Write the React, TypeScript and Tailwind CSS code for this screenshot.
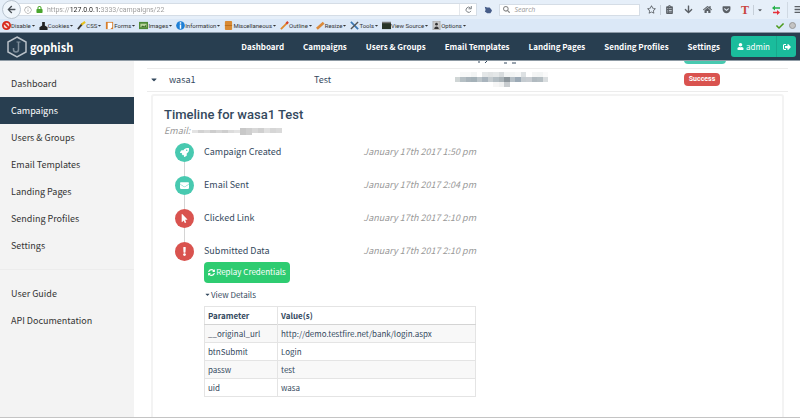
import React from "react";
import {
  FaArrowLeft, FaArrowDown, FaBars, FaCaretDown, FaCheck, FaEnvelope, FaExclamation,
  FaGetPocket, FaHome, FaLock, FaMousePointer, FaClipboardList, FaRegStar, FaRocket, FaSearch,
  FaSignOutAlt, FaSyncAlt, FaUser,
} from "react-icons/fa";
import { VscInfo } from "react-icons/vsc";

const sans = "font-['Noto_Sans_CJK_JP',sans-serif]";

const tools: { label: string; icon: React.ReactNode }[] = [
  { label: "Disable", icon: <><circle cx="5" cy="5" r="4" fill="#f6d5d0" stroke="#d8281c" strokeWidth="2" /><path d="M2 2l6 6" stroke="#d8281c" strokeWidth="2" /></> },
  { label: "Cookies", icon: <path d="M3.5 1h3v4l3 2v3H.5V7l3-2z" fill="#222" /> },
  { label: "CSS", icon: <><path d="M1 9l5-6" stroke="#333" strokeWidth="2" /><path d="M5 4l4-3" stroke="#e8c21c" strokeWidth="2.500" /></> },
  { label: "Forms", icon: <><path d="M1 1h8v8H1z" fill="#d87f2c" /><path d="M3 2h5v5l-2 2H3z" fill="#fff" /></> },
  { label: "Images", icon: <><path d="M0 1h10v8H0z" fill="#4d8a37" /><path d="M1.500 3h7v4h-7z" fill="#b9d49d" /><path d="M2 7l2-2 2 1 2-2v3z" fill="#3f6f2c" /></> },
  { label: "Information", icon: <><circle cx="5" cy="5" r="4.800" fill="#1d7fd6" /><path d="M5 1.500v1.500M5 4v4.500" stroke="#fff" strokeWidth="1.600" /></> },
  { label: "Miscellaneous", icon: <><rect x="1" y="0" width="8" height="10" rx="1" fill="#d88a34" /><path d="M1 5h8" stroke="#b96d1c" /></> },
  { label: "Outline", icon: <><path d="M1 9l7-7" stroke="#e08a2c" strokeWidth="2" /><path d="M7 3l2-2" stroke="#d6432c" strokeWidth="2.500" /></> },
  { label: "Resize", icon: <path d="M1 8.500l7.500-6.500" stroke="#dc8a3a" strokeWidth="3" /> },
  { label: "Tools", icon: <><path d="M1 1l8 8" stroke="#3c78b4" strokeWidth="2" /><path d="M9 1L1 9" stroke="#555" strokeWidth="1.500" /></> },
  { label: "View Source", icon: <><path d="M0 1h10v8H0z" fill="#273427" /><path d="M0 1h10v1.500H0z" fill="#777" /></> },
  { label: "Options", icon: <><path d="M1 0h8v10H1z" fill="#c9c9c9" stroke="#888" strokeWidth=".5" /><circle cx="5" cy="3.500" r="1.500" fill="#333" /><path d="M2.500 9a2.500 3 0 0 1 5 0z" fill="#333" /></> },
];

const navLinks = ["Dashboard", "Campaigns", "Users & Groups", "Email Templates", "Landing Pages", "Sending Profiles", "Settings"];
const helpLinks = ["User Guide", "API Documentation"];

const events = [
  { label: "Campaign Created", time: "January 17th 2017 1:50 pm", Icon: FaRocket, tone: "bg-[#48c9b0]" },
  { label: "Email Sent", time: "January 17th 2017 2:04 pm", Icon: FaEnvelope, tone: "bg-[#48c9b0]" },
  { label: "Clicked Link", time: "January 17th 2017 2:10 pm", Icon: FaMousePointer, tone: "bg-[#d9534f]" },
  { label: "Submitted Data", time: "January 17th 2017 2:10 pm", Icon: FaExclamation, tone: "bg-[#d9534f]" },
];

const params = [
  ["__original_url", "http://demo.testfire.net/bank/login.aspx"],
  ["btnSubmit", "Login"],
  ["passw", "test"],
  ["uid", "wasa"],
];

const mosaic = [
  ["#fff", "#f8f9f9", "#f8f9f9", "#f2f4f4", "#fff", "#e4e7e8", "#e0e3e4", "#e4e7e8", "#d8dcde", "#f2f4f4", "#f2f4f4", "#f6f7f7", "#dde1e3", "#fff", "#f4f5f5", "#f2f4f4", "#fafafa"],
  ["#d0d6d6", "#b5bfc4", "#a9b4bb", "#a4b1b8", "#bcc5ca", "#a9b4bd", "#c4cbcf", "#b3bdc3", "#aab3b8", "#8d969c", "#b5bfc6", "#9caab6", "#c4cbd0", "#c8cdd2", "#b1bac0", "#b5bec3", "#d9dddf"],
  ["#fff", "#fff", "#fff", "#fff", "#fff", "#fff", "#fff", "#f6f6f6", "#f0f1f1", "#c8cccf", "#fff", "#fff", "#fff", "#fff", "#fff", "#fff", "#fff"],
];

function BrowserChrome() {
  return (
    <header className="shrink-0 border-b border-[#8d9aa8] bg-[#dbe8f7] font-['Roboto',sans-serif] text-[#333]">
      <div className="flex h-[19px] items-center bg-[#e6eff9] text-[#5b6066]">
        <button aria-label="Back" className="z-10 ml-0.5 grid size-[19px] shrink-0 place-items-center rounded-full border border-[#b9c4d0] bg-[#eff5fb]">
          <FaArrowLeft className="size-[9px] text-[#4c5258]" />
        </button>
        <div className="-ml-1 flex h-[13px] flex-[463_1_0%] items-center border border-[#d5dde6] bg-white">
          <VscInfo className="ml-1.5 size-2 shrink-0 text-[#888]" />
          <FaLock className="mx-1 size-[7px] shrink-0 text-[#4aa52e]" />
          <input
            aria-label="Address"
            defaultValue="https://127.0.0.1:3333/campaigns/22"
            className="h-full min-w-0 flex-1 bg-[linear-gradient(90deg,#999_23px,#222_23px,#222_53px,#999_53px)] bg-clip-text text-[7px] leading-[11px] text-transparent"
          />
          <button aria-label="Reload" className="grid h-full w-[17px] place-items-center border-l border-[#e5e8ec]">
            <svg viewBox="0 0 10 10" className="size-[7px]" fill="none" stroke="#7b8085" strokeWidth="1.400"><path d="M8 3A3.700 3.700 0 1 0 8.500 7" /><path d="M9 0v4H5" /></svg>
          </button>
        </div>
        <svg viewBox="0 0 10 10" className="mx-[7px] size-2 shrink-0" fill="#465c88"><path d="M1 1l3 1 3 0 2 2 1 2-2 3H4L1 7l1-2z" /></svg>
        <div className="flex h-3 flex-[140_1_0%] items-center border border-[#d5dde6] bg-white">
          <FaSearch className="ml-[3px] size-[7px] shrink-0 text-[#888]" />
          <input aria-label="Search" placeholder="Search" className="ml-1 h-full min-w-0 flex-1 font-['Open_Sans',sans-serif] text-[7px] italic placeholder:text-[#999]" />
        </div>
        <div className="ml-[7px] flex shrink-0 items-center">
          <button aria-label="Bookmark"><FaRegStar className="size-[9px]" /></button>
          <span className="ml-1 h-2.5 w-px bg-[#c6cfd9]" />
          <button aria-label="Bookmarks list" className="ml-1"><FaClipboardList className="size-[9px]" /></button>
          <button aria-label="Downloads" className="ml-2.5"><FaArrowDown className="size-[9px]" /></button>
          <button aria-label="Home" className="ml-2.5"><FaHome className="size-[9px]" /></button>
          <button aria-label="Pocket" className="ml-2.5"><FaGetPocket className="size-[9px]" /></button>
          <button aria-label="Text tool" className="ml-2.5 w-2 font-['Liberation_Serif',serif] text-[12px] leading-3 font-bold text-[#c9443c]">T</button>
          <span className="ml-1 h-2.5 w-px bg-[#c6cfd9]" />
          <button aria-label="More" className="ml-[3px]"><FaCaretDown className="size-[6px]" /></button>
          <button aria-label="Proxy" className="ml-2">
            <svg viewBox="0 0 10 10" className="size-2.5"><path d="M1 3l3-2.500v1.700h5v1.600H4v1.700z" fill="#24b04a" /><path d="M9 7.500L6 5v1.700H2v1.600h4V10z" fill="#e5303a" /></svg>
          </button>
          <span className="ml-1.5 h-4 w-px bg-[#d0d9e3]" />
          <button aria-label="Menu" className="ml-1.5 w-1.5 overflow-hidden"><FaBars className="size-[9px]" /></button>
        </div>
      </div>
      <div className="flex h-[13px] items-center gap-[3px] pl-[2px] text-[6px] leading-3">
        {tools.map((t) => (
          <button key={t.label} className="flex shrink-0 items-center">
            <svg viewBox="0 0 10 10" className="size-[9px]" fill="none">{t.icon}</svg>
            <span>{t.label}</span>
            <FaCaretDown className="size-[5px]" />
          </button>
        ))}
        <FaCheck className="ml-auto size-2 text-[#4c9a1d]" />
        <span className="mr-1 ml-0.5 size-[7px] rounded-full border border-[#999] bg-[#c4c4c4]" />
      </div>
    </header>
  );
}

function Navbar() {
  return (
    <nav className={`${sans} flex h-7 shrink-0 items-center border-b border-[#8f9ba5] bg-[#283e50] pr-1 text-white`}>
      <a href="#" className="flex items-center pl-[7px]">
        <svg viewBox="0 0 20 22" className="h-[22px] w-5" fill="none" stroke="#b9c1c8" strokeWidth="1.500">
          <path d="M10 1l9 5v10l-9 5-9-5V6z" />
          <path d="M11.500 6v7.500a2.500 2.500 0 0 1-5 0V12" stroke="#7e8d99" />
          <path d="M9.500 6h4" stroke="#7e8d99" strokeWidth="1" />
        </svg>
        <span className="ml-[3px] text-[11px] leading-5 font-bold">gophish</span>
      </a>
      <div className="ml-auto flex gap-[19px] text-[8px] leading-5 font-bold whitespace-nowrap">
        {navLinks.map((l) => <a key={l} href="#">{l}</a>)}
      </div>
      <div className="ml-[11px] flex h-[21px] overflow-hidden rounded-[3px] bg-[#1abc9c] text-[8px]">
        <button className="flex w-[45px] items-center justify-center gap-0.5"><FaUser className="size-[7px]" />admin</button>
        <button aria-label="Sign out" className="grid w-5 place-items-center border-l border-[#18a98d]"><FaSignOutAlt className="size-2" /></button>
      </div>
    </nav>
  );
}

function Sidebar() {
  const item = "flex h-[27px] items-center pl-[11px]";
  return (
    <aside className={`${sans} w-[134px] shrink-0 bg-[#f3f3f3] pt-[9px] text-[9px] text-[#333]`}>
      <ul>
        {navLinks.map((l) => (
          <li key={l}>
            <a href="#" className={l === "Campaigns" ? `${item} bg-[#283e50] text-white` : item}>{l}</a>
          </li>
        ))}
      </ul>
      <ul className="mt-2.5 border-t border-[#ececec] pt-2.5">
        {helpLinks.map((l) => <li key={l}><a href="#" className={item}>{l}</a></li>)}
      </ul>
    </aside>
  );
}

function Timeline() {
  return (
    <section className="mx-1 mt-[2px] h-[400px] rounded-[3px] border-2 border-[#f3f3f3] pl-[11px]">
      <h2 className="mt-[9px] font-['Roboto',sans-serif] text-[13px] leading-5 font-medium text-[#34495e]">Timeline for wasa1 Test</h2>
      <p className="flex h-3 items-center text-[9px] text-[#999] italic">
        Email:
        <svg viewBox="0 0 90 8" className="ml-0.5 h-2 w-[90px]" aria-label="hidden address">
          {["#e3e3e3", "#d2d2d2", "#dadada", "#cdcdcd", "#d6d6d6", "#cecece", "#dcdcdc", "#e3e3e3", "#c8c8c8", "#cfcfcf", "#d8d8d8", "#d0d0d0", "#e0e0e0", "#d6d6d6", "#dadada"].map((c, i) => (
            <rect key={i} x={i * 6} y={i > 7 ? 1 : 3} width="6" height={i > 7 && i < 10 ? 7 : i > 7 ? 5 : 3} fill={c} />
          ))}
        </svg>
      </p>
      <ol className="-mt-px w-[312px] text-[9px] leading-4 text-[#34495e]">
        {events.map(({ label, time, Icon, tone }, i) => (
          <li key={label} className="flex h-[33px] items-center">
            <span className="ml-[11px] flex h-full w-[19px] flex-col items-center">
              <span className={i ? "w-px flex-1 bg-[#d4d4d4]" : "w-px flex-1"} />
              <span className={`${tone} grid size-[19px] place-items-center rounded-full text-white`}><Icon className="size-[9px]" /></span>
              <span className={i < 3 ? "w-px flex-1 bg-[#d4d4d4]" : "w-px flex-1"} />
            </span>
            <span className="ml-2.5 flex-1">{label}</span>
            <time className="text-[#999] italic">{time}</time>
          </li>
        ))}
      </ol>
      <div className="-mt-[6px] ml-10 w-[272px] text-[8px] text-[#34495e]">
        <button className="flex h-[21px] w-[86px] items-center justify-center gap-px rounded-sm bg-[#2ecc71] whitespace-nowrap text-white"><FaSyncAlt className="size-[7px] shrink-0" />Replay Credentials</button>
        <button className="mt-1 flex h-4 items-center"><FaCaretDown className="size-[7px]" />View Details</button>
        <table className="mt-[3px] w-full border-collapse border border-[#e4e4e4] text-left leading-[17px]">
          <thead>
            <tr className="border-b border-[#d4d4d4]">
              <th className="w-[73px] border-r border-[#e4e4e4] pl-[3px] font-bold">Parameter</th>
              <th className="pl-[3px] font-bold">Value(s)</th>
            </tr>
          </thead>
          <tbody>
            {params.map(([k, v]) => (
              <tr key={k} className="border-b border-[#e4e4e4] odd:bg-[#f8f8f8]">
                <td className="border-r border-[#e4e4e4] pl-[3px]">{k}</td>
                <td className="pl-[3px]">{v}</td>
              </tr>
            ))}
          </tbody>
        </table>
      </div>
    </section>
  );
}

function Results() {
  return (
    <main className={`${sans} min-w-0 flex-1 overflow-hidden pr-3 pl-[13px] text-[9px] text-[#34495e]`}>
      <table className="-mt-[17px] w-full table-fixed border-collapse">
        <colgroup>
          <col className="w-[22px]" />
          <col className="w-[145px]" />
          <col className="w-[22%]" />
          <col />
          <col className="w-[104px]" />
        </colgroup>
        <tbody>
          <tr className="h-6 border-b border-[#ececec]">
            <td /><td /><td />
            <td className="pt-4 align-top">
              <svg viewBox="0 0 70 6" className="h-1.5 w-[70px]" fill="none" stroke="#34495e"><path d="M24 1v2M32 1l-2 2M49 3h3M57 3h4" /></svg>
            </td>
            <td className="align-top"><span className="block h-5 w-[42px] rounded-sm bg-[#48c9b0]" /></td>
          </tr>
          <tr className="h-[23px] border-b border-[#ececec]">
            <td><button aria-label="Collapse details" className="block pl-1"><FaCaretDown className="h-[9px] w-1.5" /></button></td>
            <td>wasa1</td>
            <td>Test</td>
            <td>
              <svg viewBox="0 0 17 3" preserveAspectRatio="none" className="h-[15px] w-[93px]" shapeRendering="crispEdges" aria-label="hidden address">
                {mosaic.map((row, y) => row.map((c, x) => <rect key={`${x}-${y}`} x={x} y={y} width="1" height="1" fill={c} />))}
              </svg>
            </td>
            <td><span className="block h-[13px] w-9 rounded-sm bg-[#d9534f] text-center font-['Roboto',sans-serif] text-[7px] leading-[13px] font-bold text-white">Success</span></td>
          </tr>
          <tr><td colSpan={5}><Timeline /></td></tr>
        </tbody>
      </table>
    </main>
  );
}

export default function App() {
  return (
    <div className="flex h-screen flex-col overflow-hidden border-b border-[#c4c4c4] bg-white">
      <BrowserChrome />
      <Navbar />
      <div className="flex min-h-0 flex-1">
        <Sidebar />
        <Results />
      </div>
    </div>
  );
}
